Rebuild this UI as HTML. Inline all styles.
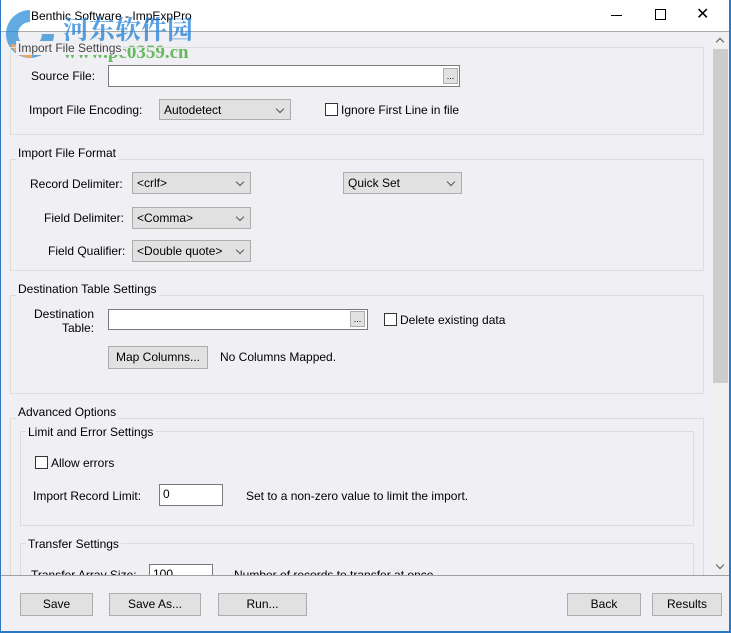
<!DOCTYPE html>
<html><head><meta charset="utf-8"><style>
*{box-sizing:border-box}
body{margin:0;width:731px;height:633px;position:relative;overflow:hidden;background:#f0eff3;font-family:"Liberation Sans",sans-serif;font-size:12px;color:#000}
.a{position:absolute;white-space:nowrap}
.g{position:absolute;border:1px solid #dcdcdc}
.gt{position:absolute;background:#f0eff3;padding:0 2px;line-height:14px}
.in{position:absolute;background:#fff;border:1px solid #7a7a7a;padding:2px 3px;line-height:14px}
.sel{position:absolute;background:#e1e1e1;border:1px solid #adadad;padding:1px 4px;line-height:19px}
.sel:after{content:"";position:absolute;right:7px;top:6px;width:5px;height:5px;border-right:1px solid #555;border-bottom:1px solid #555;transform:rotate(45deg)}
.cb{position:absolute;width:13px;height:13px;border:1px solid #333;background:#fff}
.btn{position:absolute;background:#e1e1e1;border:1px solid #adadad;text-align:center;line-height:21px}
.dots{position:absolute;background:#e1e1e1;border:1px solid #adadad;font-size:9px;text-align:center;line-height:14px}
</style></head><body>
<div class="a" style="left:0;top:0;width:731px;height:32px;background:#fff;border-bottom:1px solid #aaa"></div>
<div class="a" style="left:31px;top:9px;font-size:12px;color:#000">Benthic Software - ImpExpPro</div>
<div class="a" style="left:611px;top:15px;width:11px;height:1px;background:#000"></div>
<div class="a" style="left:655px;top:9px;width:11px;height:11px;border:1px solid #000"></div>
<div class="a" style="left:696px;top:4px;font-size:16px;color:#000">✕</div>
<div class="a" style="left:0;top:0;width:1px;height:633px;background:#2b79c2"></div>
<div class="a" style="left:729px;top:0;width:2px;height:633px;background:#2b79c2"></div>
<div class="a" style="left:0;top:631px;width:731px;height:2px;background:#2b79c2"></div>
<!-- watermark -->
<svg class="a" style="left:2px;top:6px;opacity:.7" width="56" height="56"><path d="M28 4 A24 24 0 1 0 52 28 L40 28 A12 12 0 1 1 28 16 Z" fill="#1f88d6"/><path d="M8 38 A24 24 0 0 0 30 52 L30 40 Z" fill="#f08a24"/></svg>
<div class="a" style="left:63px;top:10px;font-family:'Noto Serif CJK SC',serif;font-weight:bold;font-size:26px;color:#1f7fd6;opacity:.75">河东软件园</div>
<div class="a" style="left:63px;top:42px;font-family:'Liberation Serif',serif;font-weight:bold;font-size:19px;color:#3aa830;opacity:.75">www.pc0359.cn</div>

<div class="g" style="left:10px;top:47px;width:694px;height:88px"></div>
<div class="gt" style="left:16px;top:41px;color:#444">Import File Settings</div>
<div class="a" style="left:31px;top:69px">Source File:</div>
<div class="in" style="left:108px;top:65px;width:352px;height:22px"></div>
<div class="dots" style="left:443px;top:68px;width:15px;height:16px">...</div>
<div class="a" style="left:29px;top:103px">Import File Encoding:</div>
<div class="sel" style="left:159px;top:99px;width:132px;height:21px">Autodetect</div>
<div class="cb" style="left:325px;top:103px"></div>
<div class="a" style="left:341px;top:103px">Ignore First Line in file</div>

<div class="g" style="left:10px;top:159px;width:694px;height:112px"></div>
<div class="gt" style="left:16px;top:146px">Import File Format</div>
<div class="a" style="left:30px;top:177px">Record Delimiter:</div>
<div class="sel" style="left:132px;top:172px;width:119px;height:22px">&lt;crlf&gt;</div>
<div class="sel" style="left:343px;top:172px;width:119px;height:22px">Quick Set</div>
<div class="a" style="left:44px;top:211px">Field Delimiter:</div>
<div class="sel" style="left:132px;top:207px;width:119px;height:22px">&lt;Comma&gt;</div>
<div class="a" style="left:48px;top:244px">Field Qualifier:</div>
<div class="sel" style="left:132px;top:240px;width:119px;height:22px">&lt;Double quote&gt;</div>

<div class="g" style="left:10px;top:295px;width:694px;height:99px"></div>
<div class="gt" style="left:16px;top:282px">Destination Table Settings</div>
<div class="a" style="left:33px;top:307px;text-align:right;line-height:14px">Destination<br><span style="padding-left:29px">Table:</span></div>
<div class="in" style="left:108px;top:309px;width:260px;height:21px"></div>
<div class="dots" style="left:350px;top:311px;width:15px;height:16px">...</div>
<div class="cb" style="left:384px;top:313px"></div>
<div class="a" style="left:400px;top:313px">Delete existing data</div>
<div class="btn" style="left:108px;top:346px;width:100px;height:23px">Map Columns...</div>
<div class="a" style="left:220px;top:350px">No Columns Mapped.</div>

<div class="g" style="left:10px;top:418px;width:694px;height:200px"></div>
<div class="gt" style="left:16px;top:405px">Advanced Options</div>
<div class="g" style="left:20px;top:431px;width:674px;height:95px"></div>
<div class="gt" style="left:26px;top:425px">Limit and Error Settings</div>
<div class="cb" style="left:35px;top:456px"></div>
<div class="a" style="left:51px;top:456px">Allow errors</div>
<div class="a" style="left:33px;top:489px">Import Record Limit:</div>
<div class="in" style="left:159px;top:484px;width:64px;height:22px">0</div>
<div class="a" style="left:246px;top:489px">Set to a non-zero value to limit the import.</div>
<div class="g" style="left:20px;top:543px;width:674px;height:60px"></div>
<div class="gt" style="left:26px;top:537px">Transfer Settings</div>
<div class="a" style="left:31px;top:568px">Transfer Array Size:</div>
<div class="in" style="left:149px;top:564px;width:64px;height:22px">100</div>
<div class="a" style="left:234px;top:568px">Number of records to transfer at once.</div>

<div class="a" style="left:712px;top:33px;width:17px;height:543px;background:#f0f0f0"></div>
<div class="a" style="left:713px;top:49px;width:15px;height:334px;background:#cdcdcd"></div>
<div class="a" style="left:717px;top:39px;width:6px;height:6px;border-left:1.5px solid #555;border-top:1.5px solid #555;transform:rotate(45deg)"></div>
<div class="a" style="left:717px;top:562px;width:6px;height:6px;border-right:1.5px solid #555;border-bottom:1.5px solid #555;transform:rotate(45deg)"></div>

<div class="a" style="left:1px;top:575px;width:728px;height:56px;background:#f0eff3;border-top:1px solid #a0a0a0"></div>
<div class="btn" style="left:20px;top:593px;width:73px;height:23px">Save</div>
<div class="btn" style="left:109px;top:593px;width:92px;height:23px">Save As...</div>
<div class="btn" style="left:218px;top:593px;width:89px;height:23px">Run...</div>
<div class="btn" style="left:567px;top:593px;width:74px;height:23px">Back</div>
<div class="btn" style="left:652px;top:593px;width:70px;height:23px">Results</div>
</body></html>
